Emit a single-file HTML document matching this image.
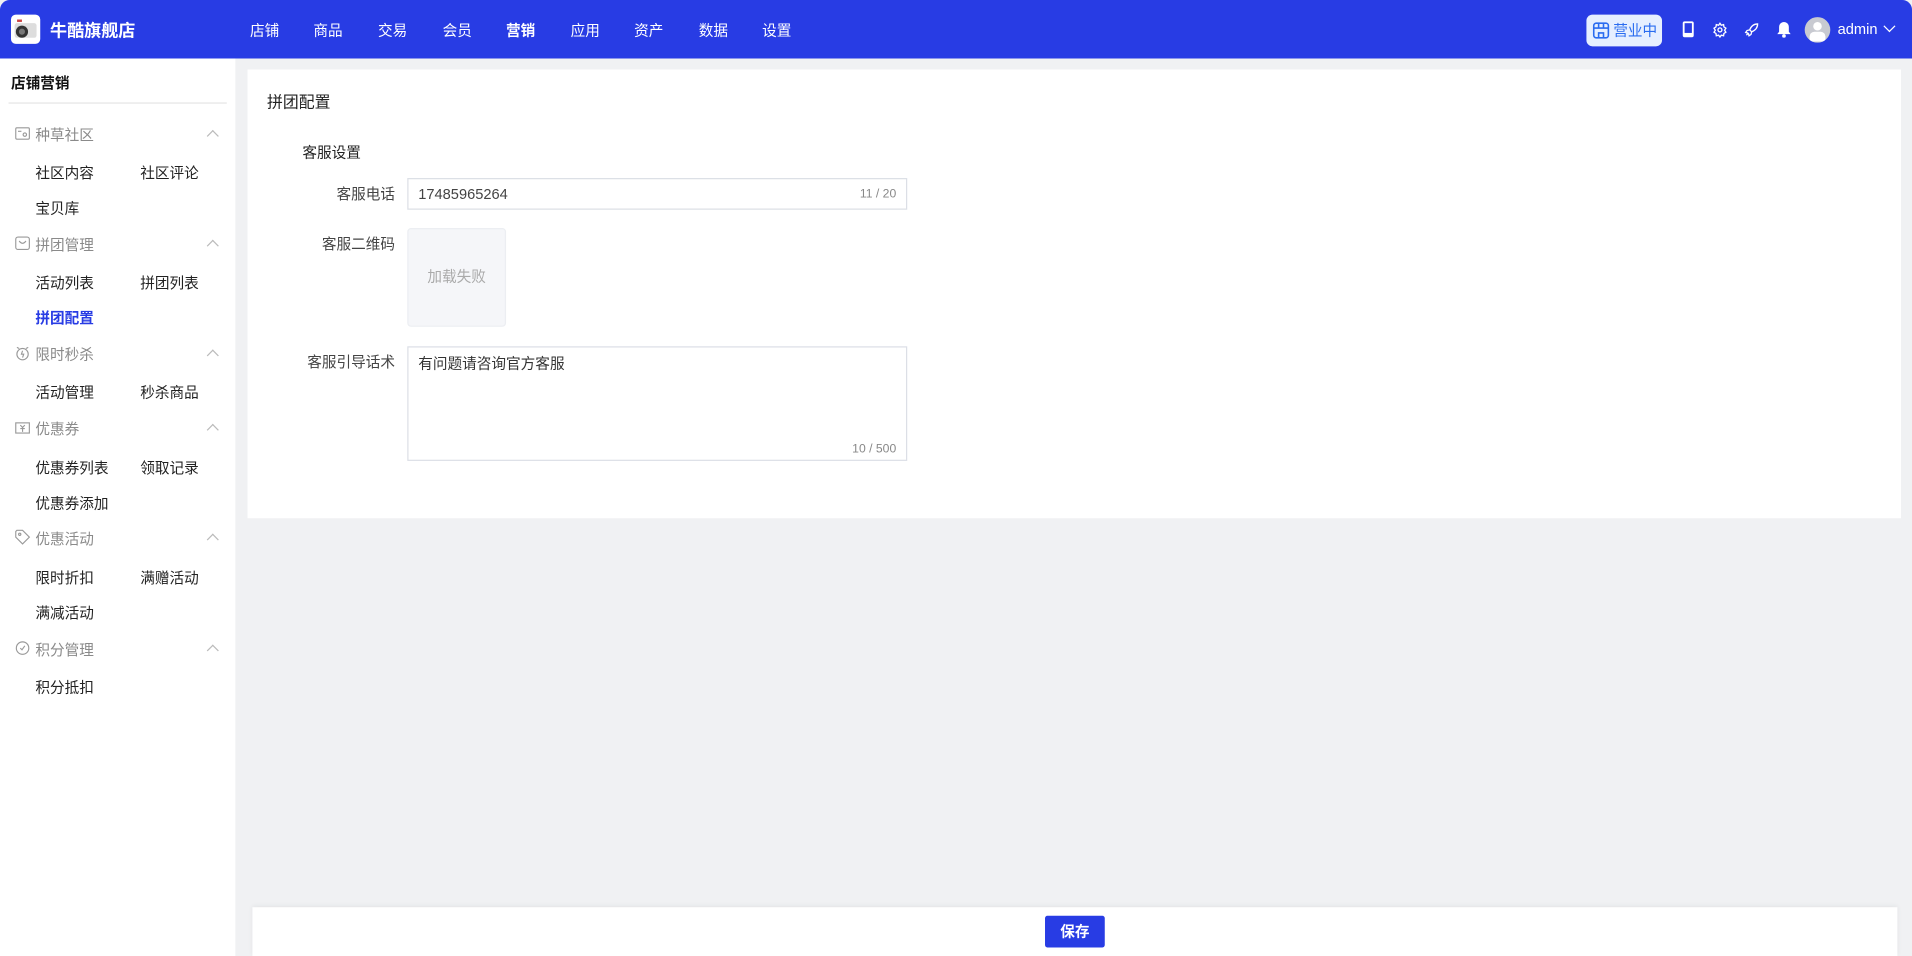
<!DOCTYPE html>
<html><head><meta charset="utf-8"><style>
*{box-sizing:border-box;margin:0;padding:0}
html,body{width:1912px;height:956px;overflow:hidden;background:#f0f1f3}
body{font-family:"Liberation Sans","Noto Sans CJK SC",sans-serif;color:#222}
#w{position:absolute;left:0;top:0;width:1568px;height:784px;transform:scale(1.219388);transform-origin:0 0;background:#f0f1f3;font-size:12px}
.hd{position:absolute;left:0;top:0;width:1568px;height:48px;background:#283ce4;color:#fff;border-top-left-radius:8px;border-top-right-radius:8px}
.logo{position:absolute;left:9px;top:12px;width:24px;height:24px;background:#fff;border-radius:4px;overflow:hidden}
.shop{position:absolute;left:41px;top:15px;font-size:14px;font-weight:bold}
.nav{position:absolute;top:16px;font-size:12px}
.nav.b{font-weight:bold}
.biz{position:absolute;left:1301px;top:12px;width:62px;height:26px;background:#e6efff;border-radius:5px;color:#2a6cf0;font-size:12px;line-height:26px;padding-left:22px}
.side{position:absolute;left:0;top:48px;width:193px;height:736px;background:#fff}
.st{position:absolute;left:9px;top:11px;font-weight:bold;font-size:12px;color:#111}
.sl{position:absolute;left:7px;top:36px;width:179px;border-top:1px solid #e5e5e5}
.g{position:absolute;left:29px;color:#8a8a8a}
.gi{position:absolute;left:12px;width:13px;height:13px}
.ar{position:absolute;left:171px;width:7px;height:7px;border-left:1px solid #bbb;border-top:1px solid #bbb;transform:rotate(45deg)}
.it{position:absolute;color:#222}
.card{position:absolute;left:203px;top:57px;width:1356px;height:368px;background:#fff}
.lbl{position:absolute;text-align:right;width:100px;color:#444}
.inp{position:absolute;left:334px;width:410px;border:1px solid #dcdfe6;background:#fff}
.foot{position:absolute;left:207px;top:744px;width:1349px;height:40px;background:#fff;box-shadow:0 -1px 4px rgba(0,0,0,.06)}
.btn{position:absolute;left:650px;top:7px;width:49px;height:26px;background:#283ce4;color:#fff;font-weight:bold;text-align:center;line-height:26px;border-radius:2px}
</style></head><body><div id="w">
<div class="hd">
 <div class="logo"><svg width="24" height="24"><rect x="3" y="7" width="18" height="12" rx="2" fill="#ddd"/><circle cx="9" cy="14" r="5" fill="#333"/><circle cx="9" cy="14" r="2.5" fill="#777"/><rect x="5" y="4" width="4" height="2" fill="#c44"/></svg></div>
 <div class="shop">牛酷旗舰店</div>
 <div class="nav" style="left:205px">店铺</div><div class="nav" style="left:257px">商品</div><div class="nav" style="left:310px">交易</div><div class="nav" style="left:363px">会员</div><div class="nav b" style="left:415px">营销</div><div class="nav" style="left:468px">应用</div><div class="nav" style="left:520px">资产</div><div class="nav" style="left:573px">数据</div><div class="nav" style="left:625px">设置</div>
 <div class="biz"><svg style="position:absolute;left:5px;top:6px" width="14" height="14" viewBox="0 0 14 14" fill="none" stroke="#2a6cf0" stroke-width="1.3"><rect x="1" y="1" width="12" height="12" rx="2"/><path d="M1 5h12M5 1v4M9 1v4M5 13V9h4v4"/></svg>营业中</div>
 <svg style="position:absolute;left:1379px;top:17px" width="11" height="14" viewBox="0 0 11 14"><rect x="1" y="0.5" width="9" height="13" rx="1.5" fill="#fff"/><rect x="2.5" y="2" width="6" height="8" fill="#283ce4"/></svg>
 <svg style="position:absolute;left:1404px;top:18px" width="13" height="13" viewBox="0 0 24 24" fill="none" stroke="#fff" stroke-width="2"><circle cx="12" cy="12" r="3"/><path d="M12 2l2 3 3.5-1 .5 3.5 3 2-2 3 2 3-3 2-.5 3.5-3.5-1-2 3-2-3-3.5 1-.5-3.5-3-2 2-3-2-3 3-2 .5-3.5 3.5 1z"/></svg>
 <svg style="position:absolute;left:1430px;top:18px" width="13" height="13" viewBox="0 0 24 24" fill="none" stroke="#fff" stroke-width="2"><path d="M21 3c-6 0-10 4-12 9l3 3c5-2 9-6 9-12zM9 12l-4 1-2 3 4 1M12 15l-1 4-3 2-1-4M4 20l3-3"/></svg>
 <svg style="position:absolute;left:1457px;top:17px" width="12" height="14" viewBox="0 0 12 14" fill="#fff"><path d="M6 1a4 4 0 0 1 4 4v4l1.5 2h-11L2 9V5a4 4 0 0 1 4-4z"/><circle cx="6" cy="12.5" r="1.5"/></svg>
 <div style="position:absolute;left:1480px;top:14px;width:21px;height:21px;border-radius:50%;background:#c8cad1;overflow:hidden"><div style="position:absolute;left:7px;top:4px;width:7px;height:7px;border-radius:50%;background:#fff"></div><div style="position:absolute;left:4px;top:12px;width:13px;height:8px;border-radius:4px 4px 0 0;background:#fff"></div></div>
 <div style="position:absolute;left:1507px;top:17px;font-size:12px">admin</div>
 <div style="position:absolute;left:1546px;top:18px;width:7px;height:7px;border-right:1px solid #fff;border-bottom:1px solid #fff;transform:rotate(45deg)"></div>
</div>
<div class="side">
 <div class="st">店铺营销</div><div class="sl"></div>
 <svg class="gi" style="top:55px" viewBox="0 0 14 14" fill="none" stroke="#999"><rect x="1" y="2" width="12" height="10" rx="1"/><circle cx="9" cy="8" r="1.5"/><path d="M3 5h3"/></svg><div class="g" style="top:54px">种草社区</div><div class="ar" style="top:60px"></div>
 <div class="it" style="left:29px;top:85px">社区内容</div><div class="it" style="left:115px;top:85px">社区评论</div><div class="it" style="left:29px;top:114px">宝贝库</div>
 <svg class="gi" style="top:145px" viewBox="0 0 14 14" fill="none" stroke="#999"><rect x="1" y="1.5" width="12" height="11" rx="2"/><path d="M4 5q3 4 6 0"/></svg><div class="g" style="top:144px">拼团管理</div><div class="ar" style="top:150px"></div>
 <div class="it" style="left:29px;top:175px">活动列表</div><div class="it" style="left:115px;top:175px">拼团列表</div><div class="it" style="left:29px;top:204px;color:#283ce4;font-weight:bold">拼团配置</div>
 <svg class="gi" style="top:235px" viewBox="0 0 14 14" fill="none" stroke="#999"><circle cx="7" cy="8" r="5"/><path d="M7 5l-1 3h2l-1 3M2 2l2 1M12 2l-2 1"/></svg><div class="g" style="top:234px">限时秒杀</div><div class="ar" style="top:240px"></div>
 <div class="it" style="left:29px;top:265px">活动管理</div><div class="it" style="left:115px;top:265px">秒杀商品</div>
 <svg class="gi" style="top:296px" viewBox="0 0 14 14" fill="none" stroke="#999"><rect x="1" y="3" width="12" height="9"/><path d="M5 5l2 2 2-2M7 7v4M5 8h4"/></svg><div class="g" style="top:295px">优惠券</div><div class="ar" style="top:301px"></div>
 <div class="it" style="left:29px;top:327px">优惠券列表</div><div class="it" style="left:115px;top:327px">领取记录</div><div class="it" style="left:29px;top:356px">优惠券添加</div>
 <svg class="gi" style="top:386px" viewBox="0 0 14 14" fill="none" stroke="#999"><path d="M1 2v5l6 6 6-6-6-6H2z"/><circle cx="4.5" cy="4.5" r="1"/></svg><div class="g" style="top:385px">优惠活动</div><div class="ar" style="top:391px"></div>
 <div class="it" style="left:29px;top:417px">限时折扣</div><div class="it" style="left:115px;top:417px">满赠活动</div><div class="it" style="left:29px;top:446px">满减活动</div>
 <svg class="gi" style="top:477px" viewBox="0 0 14 14" fill="none" stroke="#999"><circle cx="7" cy="7" r="5.5"/><path d="M5 7l1.5 1.5L9 5"/></svg><div class="g" style="top:476px">积分管理</div><div class="ar" style="top:482px"></div>
 <div class="it" style="left:29px;top:507px">积分抵扣</div>
</div>
<div class="card">
 <div style="position:absolute;left:16px;top:16px;font-size:13px;color:#222">拼团配置</div>
 <div style="position:absolute;left:45px;top:59px;color:#222">客服设置</div>
</div>
<div class="lbl" style="left:224px;top:150px">客服电话</div>
<div class="inp" style="top:146px;height:26px"><span style="position:absolute;left:8px;top:5px;color:#444">17485965264</span><span style="position:absolute;right:8px;top:7px;color:#888;font-size:10px">11 / 20</span></div>
<div class="lbl" style="left:224px;top:191px">客服二维码</div>
<div style="position:absolute;left:334px;top:187px;width:81px;height:81px;background:#f5f6f9;border:1px solid #eceef2;border-radius:3px;color:#aaa;text-align:center;line-height:79px">加载失败</div>
<div class="lbl" style="left:224px;top:288px">客服引导话术</div>
<div class="inp" style="top:284px;height:94px"><span style="position:absolute;left:8px;top:4px;color:#333">有问题请咨询官方客服</span><span style="position:absolute;right:8px;top:78px;color:#888;font-size:10px">10 / 500</span></div>
<div class="foot"><div class="btn">保存</div></div>
</div></body></html>
